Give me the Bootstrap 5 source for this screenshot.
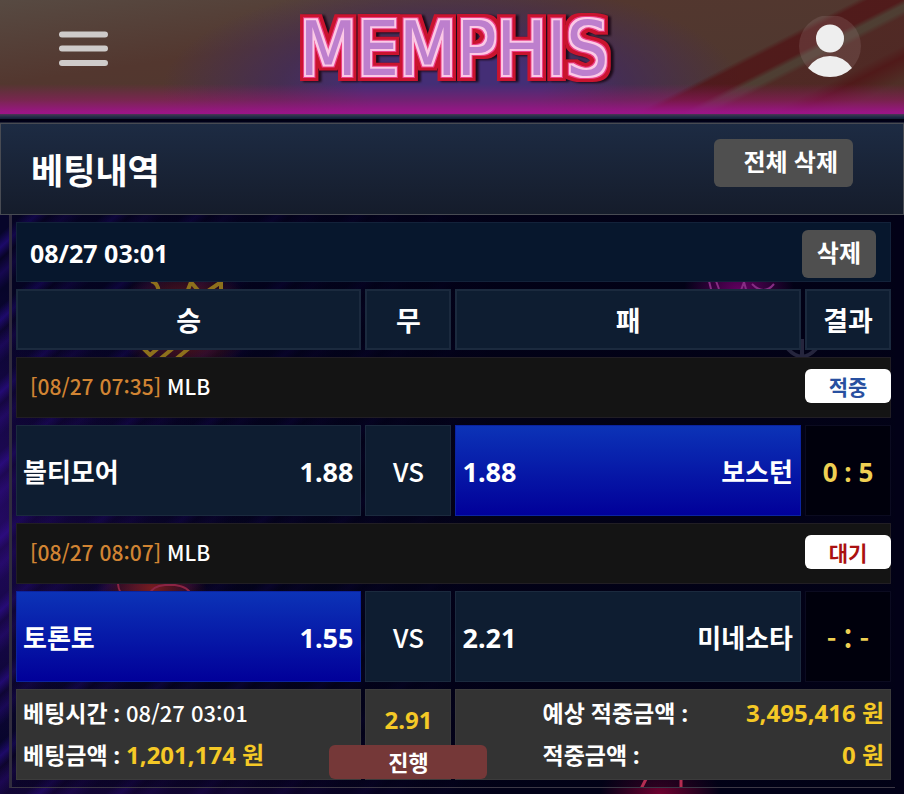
<!DOCTYPE html>
<html lang="ko">
<head>
<meta charset="utf-8">
<meta name="viewport" content="width=device-width, initial-scale=1">
<title>베팅내역</title>
<link href="https://cdn.jsdelivr.net/npm/bootstrap@5.3.0/dist/css/bootstrap.min.css" rel="stylesheet">
<style>
:root { --cell: #0e1d31; --gold: #f5c926; }
body {
  font-family: "Noto Sans", "Noto Sans CJK KR", sans-serif;
  color: #fff;
  line-height: 1.25;
  background-color: #02021a;
}
.backdrop {
  min-height: 100vh;
  background:
    radial-gradient(ellipse 60px 40px at 660px 100%, #70002f, transparent),
    linear-gradient(90deg, rgba(2,2,26,0) 0, rgba(2,2,26,.45) 180px, #020117 500px),
    radial-gradient(ellipse 260px 230px at 0 520px, rgba(62,14,150,.5), transparent),
    radial-gradient(ellipse 400px 60px at 240px 100%, rgba(50,8,90,.6), transparent),
    repeating-linear-gradient(138deg, #07052a 0 12px, #1c0a6a 22px, #080426 31px, #160850 42px, #07052a 54px);
}
.topbar {
  min-height: 123px;
  padding: 0 42px 6px 58px;
  border-bottom: 9px solid #02031b;
  border-image: linear-gradient(#4d3655 0, #26304a 25%, #142039 55%, #00000e 62%, #00001a 85%, #343845) 9;
  background:
    linear-gradient(transparent 84px, rgba(158,22,111,.5) 100px, rgba(157,20,137,.95) 112px),
    linear-gradient(153deg, transparent 76%, rgba(80,20,22,.8) 77% 80%, rgba(78,64,52,.8) 81% 82%, rgba(80,32,30,.6) 83% 88%, rgba(80,18,20,.8) 90%, rgba(80,38,30,.5) 94%),
    radial-gradient(ellipse 290px 110px at 50% 90px, #442e76 30%, rgba(65,42,96,.7) 60%, transparent),
    linear-gradient(172deg, #574a42, #53372f 35%, #4d382f);
}
.stripes {
  height: 9px;
  background: linear-gradient(#4d3655, #26304a 25%, #142039 50%, #00000e 60%, #00001a 85%, #343845);
}
.topbar { min-height: 114px; border: 0; padding-bottom: 0; }
.menu-btn { color: #cecbca; line-height: 0; }
.title-bar {
  min-height: 92px;
  padding: 4px 50px 0 30px;
  border: 1px solid #484b53;
  background: linear-gradient(#1d2b43, #151c2b);
}
.title-bar h1 { font-size: 35px; }
.btn-gray, .btn-gray:hover { background: #4f4f4f; color: #fff; border: 0; border-radius: 6px; font-weight: 700; font-size: 24px; line-height: 30px; padding: 8px 15px 10px; }
.btn-gray.clear-all { padding-left: 29px; margin-bottom: 16px; }
.delete-one { margin-right: 14px; }
.bet-panel {
  margin: 0 9px;
  border-left: 3px solid #302c3e;
  border-bottom: 1px solid #3c3845;
  background: url("data:image/svg+xml,%3Csvg xmlns='http://www.w3.org/2000/svg' width='883' height='572' fill='none'%3E%3Cdefs%3E%3CradialGradient id='r'%3E%3Cstop stop-color='%23771c20'/%3E%3Cstop offset='1' stop-color='%23771c20' stop-opacity='0'/%3E%3C/radialGradient%3E%3CradialGradient id='p'%3E%3Cstop stop-color='%23620060'/%3E%3Cstop offset='1' stop-color='%23620060' stop-opacity='0'/%3E%3C/radialGradient%3E%3C/defs%3E%3Cellipse cx='173' cy='105' rx='68' ry='60' fill='url(%23r)'/%3E%3Cellipse cx='727' cy='75' rx='55' ry='40' fill='url(%23p)'/%3E%3Cellipse cx='140' cy='373' rx='55' ry='35' fill='url(%23r)'/%3E%3Cg stroke='%238d701c' stroke-width='4'%3E%3Cpath d='M139 66q7 1 8 12M174 80l5-13 11 13 19-13v13M126 128l12 12 14-12M148 144l24-20M164 144l24-20'/%3E%3C/g%3E%3Cg stroke='%23852d83' stroke-width='2'%3E%3Cpath d='M697 66l3 12M704 66l3 8M728 78l4-11 3 11M740 69q12 12 22 0M694 76h28'/%3E%3C/g%3E%3Cg stroke='%2325253d' stroke-width='4'%3E%3Cpath d='M776 134q14 15 28 0M790 124v20'/%3E%3C/g%3E%3Cg stroke='%238b2444' stroke-width='2'%3E%3Cpath d='M106 369q1 9 5 9M137 380q3-9 16-10h10q14 2 16 10'/%3E%3C/g%3E%3Cg stroke='%23b52c51' stroke-width='3'%3E%3Cpath d='M634 564l-5 10M669 564v10'/%3E%3C/g%3E%3C/svg%3E") no-repeat, linear-gradient(90deg, rgba(2,2,22,.35), rgba(2,2,22,.6));
}
.bet-table { width: 100%; table-layout: fixed; border-collapse: separate; border-spacing: 4px 7px; font-weight: 700; }
.bet-table td, .bet-table th { padding: 0; border: 1px solid #1b2a3e; background: var(--cell); }
.narrow-col { width: 86px; }
.bet-table .date-cell { background: #07172d; border-color: #13223a; height: 60px; font-size: 25px; padding: 3px 0 0 13px; }
.bet-table thead th { height: 61px; border-width: 2px; font-size: 27px; text-align: center; padding-top: 2px; }
.bet-table .league-cell { background: #141414; border-color: #211e24; height: 61px; padding: 0 0 4px 13px; font: 500 21px "Noto Sans CJK KR", sans-serif; }
.league-cell time { color: #d18433; }
.state-tag { width: 86px; height: 34px; line-height: 34px; margin-right: -1px; border-radius: 6px; background: #fff; text-align: center; font-size: 21px; font-weight: 700; }
.state-hit { color: #2850a0; }
.state-wait { color: #aa1111; }
.bet-table .pick-cell { height: 91px; padding: 3px 7px 0 6px; font-size: 26px; }
.pick-cell .odds { font-size: 27px; }
.bet-table .picked { background: linear-gradient(#0c33b7, #010099); border-color: #0b23a0; }
.bet-table .versus { font: 500 26px "Noto Sans CJK KR", sans-serif; text-align: center; }
.bet-table .score { background: rgba(0,0,10,.75); border-color: #0b0b20; color: #efd053; text-align: center; font-size: 26px; padding-top: 3px; }
.bet-table .score-open { font-family: "Noto Sans CJK KR", sans-serif; }
.bet-table .sum-cell { height: 91px; background: #333; border-color: #3b3b3b; font: 700 23px/42px "Noto Sans", "Noto Sans CJK KR", sans-serif; padding: 2px 6px 0; vertical-align: top; }
.sum-cell .placed { font: 500 22px/30px "Noto Sans CJK KR", sans-serif; }
.gold { color: var(--gold); }
.sum-cell .gold { font-size: 24px; }
.sum-cell .total { line-height: 56px; }
.sum-cell .payouts { padding-left: 80px; }
.state-btn, .state-btn:hover { width: 158px; height: 34px; padding: 0; left: 50%; bottom: 0; transform: translateX(-50%); border: 0; border-radius: 6px; background: #753838; color: #fff; font-size: 22px; line-height: 32px; font-weight: 700; }
.neon text { font: 400 74px "DejaVu Sans Condensed", sans-serif; text-anchor: middle; }
</style>
<script src="https://cdn.jsdelivr.net/npm/bootstrap@5.3.0/dist/js/bootstrap.bundle.min.js"></script>
</head>
<body>
<div class="backdrop">
  <header class="topbar d-flex align-items-start justify-content-between">
    <button type="button" class="menu-btn btn p-0 border-0 mt-4" aria-label="메뉴">
      <svg class="mt-1" width="51" height="42" fill="none" stroke="currentColor" stroke-width="6" stroke-linecap="round"><path d="M4 6.500h43M4 20.500h43M4 35h43"/></svg>
    </button>
    <a href="#" class="neon">
      <svg width="360" height="100" viewBox="0 0 360 100">
        <defs>
          <filter id="tube" x="-5%" y="-20%" width="110%" height="140%" color-interpolation-filters="sRGB">
            <feMorphology in="SourceAlpha" operator="dilate" radius="6" result="wide"/>
            <feGaussianBlur in="wide" stdDeviation="1"/>
            <feOffset dx="3" dy="1" result="shade"/>
            <feFlood flood-color="#1c0a18"/><feComposite in2="shade" operator="in" result="shadeFill"/>
            <feFlood flood-color="#c9142e"/><feComposite in2="wide" operator="in" result="redFill"/>
            <feMorphology in="SourceAlpha" operator="dilate" radius="3" result="mid"/>
            <feFlood flood-color="#ee3f86"/><feComposite in2="mid" operator="in" result="pinkFill"/>
            <feMorphology in="SourceAlpha" operator="dilate" radius="2" result="slim"/>
            <feFlood flood-color="#fbc9e6"/><feComposite in2="slim" operator="in" result="paleFill"/>
            <feMerge><feMergeNode in="shadeFill"/><feMergeNode in="redFill"/><feMergeNode in="pinkFill"/><feMergeNode in="paleFill"/><feMergeNode in="SourceGraphic"/></feMerge>
          </filter>
        </defs>
        <text x="180" y="75" fill="#bd7fcd" filter="url(#tube)">MEMPHIS</text>
      </svg>
    </a>
    <button type="button" class="btn p-0 border-0 mt-3 lh-1" aria-label="내 정보">
      <svg width="64" height="64"><circle cx="32" cy="30" r="31" fill="#a08080" fill-opacity=".23"/><g fill="#eee"><circle cx="32" cy="22.500" r="14"/><path d="M10 52Q18 40 32 40T54 52Q45 61 32 61T10 52Z"/></g></svg>
    </button>
  </header>
  <div class="stripes"></div>

  <div class="title-bar d-flex align-items-center justify-content-between">
    <h1 class="fw-bold m-0">베팅내역</h1>
    <button type="button" class="btn btn-gray clear-all">전체 삭제</button>
  </div>

  <main class="bet-panel">
    <table class="bet-table">
      <colgroup><col><col class="narrow-col"><col><col class="narrow-col"></colgroup>
      <thead>
        <tr><td colspan="4" class="date-cell">
          <div class="d-flex align-items-center justify-content-between"><time>08/27 03:01</time><button type="button" class="btn btn-gray delete-one">삭제</button></div>
        </td></tr>
        <tr><th scope="col">승</th><th scope="col">무</th><th scope="col">패</th><th scope="col">결과</th></tr>
      </thead>
      <tbody>
        <tr><td colspan="4" class="league-cell">
          <div class="d-flex align-items-center justify-content-between"><span><time>[08/27 07:35]</time> MLB</span><span class="state-tag state-hit">적중</span></div>
        </td></tr>
        <tr>
          <td class="pick-cell"><div class="d-flex align-items-center justify-content-between"><span>볼티모어</span><span class="odds">1.88</span></div></td>
          <td class="versus">VS</td>
          <td class="pick-cell picked"><div class="d-flex align-items-center justify-content-between"><span class="odds">1.88</span><span>보스턴</span></div></td>
          <td class="score">0 : 5</td>
        </tr>
        <tr><td colspan="4" class="league-cell">
          <div class="d-flex align-items-center justify-content-between"><span><time>[08/27 08:07]</time> MLB</span><span class="state-tag state-wait">대기</span></div>
        </td></tr>
        <tr>
          <td class="pick-cell picked"><div class="d-flex align-items-center justify-content-between"><span>토론토</span><span class="odds">1.55</span></div></td>
          <td class="versus">VS</td>
          <td class="pick-cell"><div class="d-flex align-items-center justify-content-between"><span class="odds">2.21</span><span>미네소타</span></div></td>
          <td class="score score-open">- : -</td>
        </tr>
      </tbody>
      <tfoot>
        <tr>
          <td class="sum-cell">
            <div>베팅시간 : <span class="placed">08/27 03:01</span></div>
            <div>베팅금액 : <span class="gold">1,201,174 원</span></div>
          </td>
          <td class="sum-cell position-relative text-center">
            <div class="total gold">2.91</div>
            <button type="button" class="btn state-btn position-absolute">진행</button>
          </td>
          <td colspan="2" class="sum-cell">
            <div class="payouts">
              <div class="d-flex justify-content-between"><span>예상 적중금액 :</span><span class="gold">3,495,416 원</span></div>
              <div class="d-flex justify-content-between"><span>적중금액 :</span><span class="gold">0 원</span></div>
            </div>
          </td>
        </tr>
      </tfoot>
    </table>
  </main>
</div>
</body>
</html>
